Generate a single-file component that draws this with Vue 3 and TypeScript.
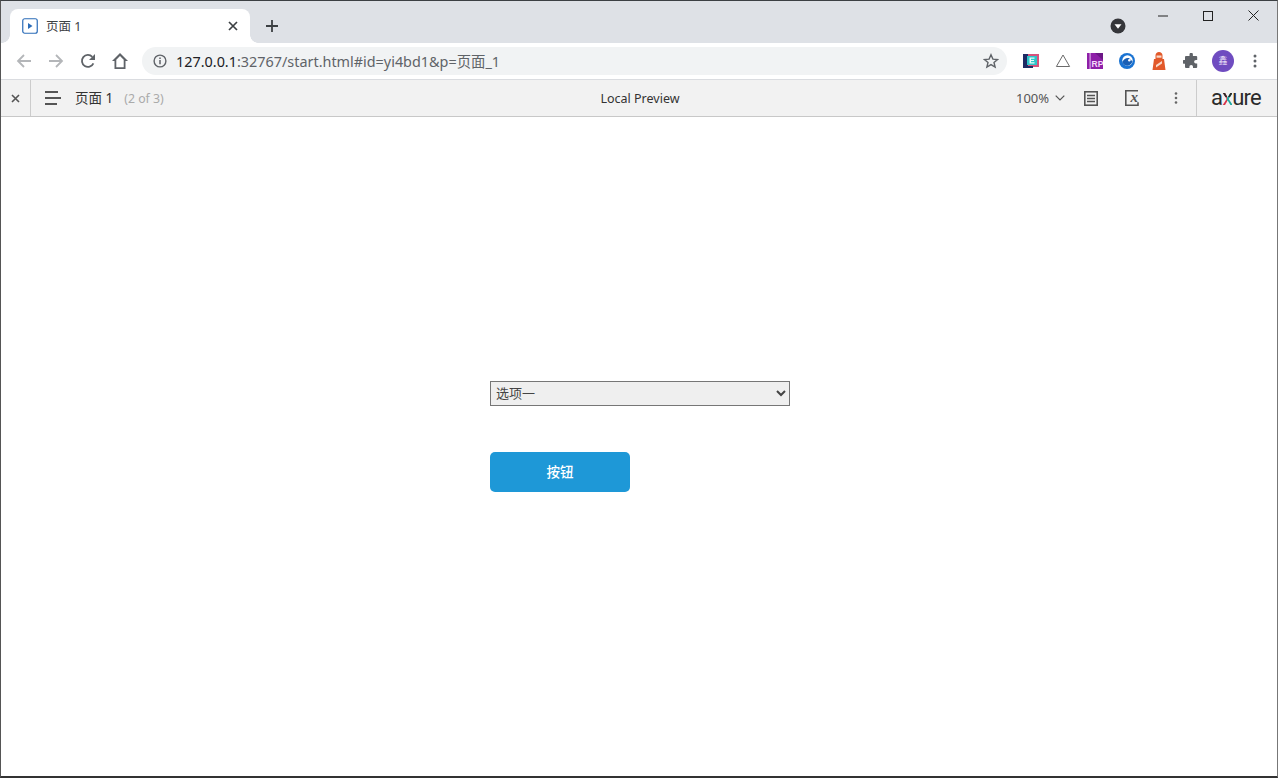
<template>
  <div class="window">
    <div class="tabstrip">
      <div class="tab">
        <svg class="favicon" width="16" height="16" viewBox="0 0 16 16">
          <rect x="0.75" y="0.75" width="14.5" height="14.5" rx="2" fill="#fff" stroke="#2b6cb8" stroke-width="1.2" />
          <path d="M6 5l4.5 3L6 11z" fill="#2b6cb8" />
        </svg>
        <span class="tab-title">页面 1</span>
        <svg class="tab-close" width="10" height="10" viewBox="0 0 10 10">
          <path d="M1 1l8 8M9 1l-8 8" stroke="#3c4043" stroke-width="1.7" />
        </svg>
      </div>
      <svg class="new-tab" width="14" height="14" viewBox="0 0 14 14">
        <path d="M7 1v12M1 7h12" stroke="#3c4043" stroke-width="1.8" />
      </svg>
      <div class="strip-space"></div>
      <svg class="profile-drop" width="16" height="16" viewBox="0 0 16 16">
        <circle cx="8" cy="8" r="7.5" fill="#35363a" />
        <path d="M4.5 6.2h7L8 10.8z" fill="#fff" />
      </svg>
      <div class="win-controls">
        <svg width="10" height="10" viewBox="0 0 10 10"><path d="M0 5h10" stroke="#222" /></svg>
        <svg width="10" height="10" viewBox="0 0 10 10"><rect x="0.5" y="0.5" width="9" height="9" fill="none" stroke="#222" /></svg>
        <svg width="11" height="11" viewBox="0 0 11 11"><path d="M0.5 0.5l10 10M10.5 0.5l-10 10" stroke="#222" /></svg>
      </div>
    </div>

    <div class="toolbar">
      <div class="nav-buttons">
        <svg width="16" height="16" viewBox="0 0 16 16"><path d="M15 8H2M8 2L2 8l6 6" fill="none" stroke="#b4b6b9" stroke-width="1.8" /></svg>
        <svg width="16" height="16" viewBox="0 0 16 16"><path d="M1 8h13M8 2l6 6-6 6" fill="none" stroke="#b4b6b9" stroke-width="1.8" /></svg>
        <svg width="16" height="16" viewBox="0 0 16 16"><path d="M13.4 10.4A6 6 0 1 1 12.3 3.8" fill="none" stroke="#5f6368" stroke-width="1.8" /><path d="M15 1v6H9z" fill="#5f6368" /></svg>
        <svg width="16" height="18" viewBox="0 0 16 18"><path d="M8 1L0 9h2.500v8h11V9H16zM4.300 15.300V7.800L8 4l3.700 3.800v7.500z" fill="#5f6368" fill-rule="evenodd" /></svg>
      </div>
      <div class="omnibox">
        <svg width="14" height="14" viewBox="0 0 14 14">
          <circle cx="7" cy="7" r="5.9" fill="none" stroke="#5f6368" stroke-width="1.4" />
          <path d="M7 6v4.3M7 3.4v1.5" stroke="#5f6368" stroke-width="1.5" />
        </svg>
        <span class="url"><span class="url-host">127.0.0.1</span>:32767/start.html#id=yi4bd1&amp;p=页面_1</span>
        <svg class="star" width="16" height="16" viewBox="0 0 16 16">
          <path d="M8 1.8l1.900 4.300 4.600.4-3.500 3 1.100 4.600L8 11.600l-4.100 2.500L5 9.500l-3.500-3 4.600-.4z" fill="none" stroke="#5f6368" stroke-width="1.4" />
        </svg>
      </div>
      <div class="extensions">
        <svg width="16" height="16" viewBox="0 0 16 16">
          <rect x="4" y="1" width="12" height="13" fill="#d8527c" />
          <rect x="0" y="1" width="5" height="14" fill="#1e2a63" />
          <rect x="0" y="13" width="10" height="2" fill="#1e2a63" />
          <rect x="4" y="3" width="10" height="9" fill="#2fc4c8" />
          <path d="M6.500 4.500h5v1.300H8v1.100h3v1.200H8v1.100h3.500v1.300h-5z" fill="#e8fbfb" />
        </svg>
        <svg width="16" height="16" viewBox="0 0 16 16"><path d="M8 2l6.600 11.500H1.400z" fill="none" stroke="#6b6b6b" /></svg>
        <svg width="16" height="16" viewBox="0 0 16 16">
          <rect x="0" y="0" width="16" height="16" fill="#8e1fa8" />
          <rect x="2.500" y="0" width="1.200" height="16" fill="#d9a8e4" />
          <path d="M8 0h8v7z" fill="#6b1786" />
          <text x="4.500" y="14" font-size="8.500" font-family="Liberation Sans" font-weight="700" fill="#f4d9fa">RP</text>
        </svg>
        <svg width="16" height="16" viewBox="0 0 16 16">
          <circle cx="8" cy="8" r="8" fill="#1a73d2" />
          <circle cx="8.500" cy="7.500" r="5.200" fill="#fff" />
          <path d="M3.300 9C5 5.500 7.500 4.500 10 5c1 1.500 2.500 2.500 3.500 3-.5 2.500-2.500 4.500-5 4.700-2.500 0-4.500-1.500-5.200-3.700z" fill="#1a5fb4" />
          <circle cx="10.300" cy="7.200" r="1.200" fill="#fff" />
        </svg>
        <svg width="16" height="18" viewBox="0 0 16 18">
          <path d="M8 0c2 0 3.500 1.500 3.500 3.500V7H13l1.500 11h-13L3 7h1.500V3.500C4.500 1.500 6 0 8 0z" fill="#e2592a" />
          <rect x="5.500" y="3.500" width="5" height="2.200" fill="#f8d9c9" />
          <path d="M5 13l6-4v2.500l-6 4z" fill="#f8d9c9" />
        </svg>
        <svg width="16" height="16" viewBox="0 0 16 16">
          <path d="M6.500 1.500a1.700 1.700 0 0 1 3.400 0V3h3.300a1 1 0 0 1 1 1v3h-1.300a1.800 1.800 0 0 0 0 3.600h1.300v3.400a1 1 0 0 1-1 1H10v-1.300a1.800 1.800 0 0 0-3.600 0V15H3a1 1 0 0 1-1-1v-3.300H.800a1.800 1.800 0 0 1 0-3.600H2V4a1 1 0 0 1 1-1h3.500z" fill="#5f6368" />
        </svg>
        <div class="avatar">鑫</div>
        <svg class="menu-dots" width="4" height="14" viewBox="0 0 4 14">
          <circle cx="2" cy="2" r="1.500" fill="#5f6368" />
          <circle cx="2" cy="7" r="1.500" fill="#5f6368" />
          <circle cx="2" cy="12" r="1.500" fill="#5f6368" />
        </svg>
      </div>
    </div>

    <div class="axure-bar">
      <div class="close-cell">
        <svg width="9" height="9" viewBox="0 0 9 9"><path d="M1 1l7 7M8 1L1 8" stroke="#555" stroke-width="1.600" /></svg>
      </div>
      <div class="page-info">
        <svg width="16" height="14" viewBox="0 0 16 14">
          <path d="M0 1h13M0 7h16M0 13h12" stroke="#555" stroke-width="2" />
        </svg>
        <span class="page-name">页面 1</span>
        <span class="page-count">(2 of 3)</span>
      </div>
      <div class="preview-label">Local Preview</div>
      <div class="bar-tools">
        <span class="zoom-level">100%</span>
        <svg class="zoom-chevron" width="10" height="6" viewBox="0 0 10 6"><path d="M0.700 0.700L5 5l4.300-4.300" fill="none" stroke="#555" stroke-width="1.200" /></svg>
        <svg class="doc-icon" width="14" height="15" viewBox="0 0 14 15">
          <rect x="0.800" y="0.800" width="12.400" height="13.400" fill="none" stroke="#555" stroke-width="1.600" />
          <path d="M3 4.500h8M3 7.500h8M3 10.500h8" stroke="#555" stroke-width="1.300" />
        </svg>
        <svg class="var-icon" width="16" height="16" viewBox="0 0 16 16">
          <path d="M13 .800H.800v14.400H13v-3" fill="none" stroke="#555" stroke-width="1.600" />
          <text x="5.500" y="12" font-size="15" font-style="italic" font-family="Liberation Serif" font-weight="700" fill="#555">x</text>
        </svg>
        <svg class="bar-dots" width="4" height="12" viewBox="0 0 4 12">
          <circle cx="2" cy="1.500" r="1.300" fill="#666" />
          <circle cx="2" cy="6" r="1.300" fill="#666" />
          <circle cx="2" cy="10.500" r="1.300" fill="#666" />
        </svg>
      </div>
      <div class="axure-logo">a<span class="logo-x">x</span>ure</div>
    </div>

    <main class="page">
      <select class="page-select">
        <option>选项一</option>
        <option>选项二</option>
      </select>
      <button class="page-button" type="button">按钮</button>
    </main>
  </div>
</template>

<script setup lang="ts">
</script>

<style>
html,
body {
  margin: 0;
  background: #fff;
}
</style>

<style scoped>
.window {
  box-sizing: border-box;
  width: 1278px;
  height: 778px;
  display: flex;
  flex-direction: column;
  border-top: 1px solid #3c4043;
  border-left: 1px solid #555;
  border-right: 1px solid #777;
  border-bottom: 2px solid #333;
  font-family: "Noto Sans", "Noto Sans CJK SC", sans-serif;
  overflow: hidden;
}

.tabstrip {
  height: 42px;
  flex: none;
  display: flex;
  align-items: flex-end;
  background: #dee1e6;
  padding-left: 9px;
}

.tab {
  position: relative;
  box-sizing: border-box;
  width: 240px;
  height: 34px;
  display: flex;
  align-items: center;
  padding: 0 12px;
  background: #fff;
  border-radius: 8px 8px 0 0;
}

.tab::before,
.tab::after {
  content: "";
  position: absolute;
  bottom: 0;
  width: 8px;
  height: 8px;
}

.tab::before {
  left: -8px;
  background: radial-gradient(circle at 0 0, #dee1e6 7.5px, #fff 8px);
}

.tab::after {
  right: -8px;
  background: radial-gradient(circle at 100% 0, #dee1e6 7.5px, #fff 8px);
}

.favicon {
  flex: none;
}

.tab-title {
  margin-left: 8px;
  padding-bottom: 2px;
  flex: 1;
  font-size: 12.5px;
  color: #3c4043;
}

.new-tab {
  margin: 0 0 10px 15px;
}

.strip-space {
  flex: 1;
}

.profile-drop {
  margin-bottom: 9px;
}

.win-controls {
  align-self: flex-start;
  display: flex;
  align-items: center;
  gap: 35px;
  margin: 9px 18px 0 32px;
}

.toolbar {
  height: 37px;
  flex: none;
  display: flex;
  align-items: center;
  background: #fff;
  border-bottom: 1px solid #dadce0;
  box-sizing: border-box;
}

.nav-buttons {
  display: flex;
  align-items: center;
  gap: 16px;
  padding-left: 15px;
}

.omnibox {
  box-sizing: border-box;
  width: 865px;
  height: 28px;
  margin-left: 14px;
  display: flex;
  align-items: center;
  padding: 0 8px 0 11px;
  background: #f1f3f4;
  border-radius: 14px;
}

.url {
  flex: 1;
  margin-left: 9px;
  padding-bottom: 2px;
  font-size: 14.4px;
  color: #5f6368;
  white-space: nowrap;
}

.url-host {
  color: #202124;
}

.extensions {
  display: flex;
  align-items: center;
  gap: 16px;
  padding-left: 16px;
}

.avatar {
  width: 22px;
  height: 22px;
  margin-left: -3px;
  border-radius: 50%;
  background: #6f4cc0;
  color: #e6dcf5;
  font-size: 9px;
  line-height: 22px;
  text-align: center;
}

.menu-dots {
  margin-left: 3px;
}

.axure-bar {
  box-sizing: border-box;
  height: 37px;
  flex: none;
  display: flex;
  align-items: center;
  background: #f2f2f2;
  border-bottom: 1px solid #c8c8c8;
}

.close-cell {
  box-sizing: border-box;
  width: 30px;
  height: 100%;
  display: flex;
  align-items: center;
  justify-content: center;
  border-right: 1px solid #ccc;
}

.page-info {
  box-sizing: border-box;
  width: 250px;
  display: flex;
  align-items: center;
  padding-left: 14px;
  white-space: nowrap;
}

.page-name {
  margin-left: 14px;
  padding-bottom: 2px;
  font-size: 13.5px;
  color: #333;
}

.page-count {
  margin-left: 11px;
  font-size: 12.3px;
  color: #aaa;
}

.preview-label {
  width: 718px;
  text-align: center;
  font-size: 12.5px;
  color: #333;
}

.bar-tools {
  box-sizing: border-box;
  width: 198px;
  height: 100%;
  display: flex;
  align-items: center;
  border-right: 1px solid #ccc;
}

.zoom-level {
  margin-left: 17px;
  font-size: 13px;
  color: #555;
}

.zoom-chevron {
  margin-left: 6px;
}

.doc-icon {
  margin-left: 19px;
}

.var-icon {
  margin-left: 27px;
}

.bar-dots {
  margin-left: 33px;
}

.axure-logo {
  margin-left: 14px;
  font-family: Roboto, sans-serif;
  font-size: 22px;
  line-height: 1;
  letter-spacing: -0.8px;
  color: #2b2b2b;
  white-space: nowrap;
}

.logo-x {
  background:
    linear-gradient(#2b2b2b 50%, transparent 50%),
    linear-gradient(90deg, #d8344a 50%, #1fa7a0 50%);
  -webkit-background-clip: text;
  background-clip: text;
  color: transparent;
}

.page {
  flex: 1;
  display: flex;
  flex-direction: column;
  align-items: flex-start;
  padding: 264px 0 0 489px;
  background: #fff;
}

.page-select {
  box-sizing: border-box;
  width: 300px;
  height: 25px;
  padding: 0 1px 2px;
  border: 1px solid #767676;
  border-radius: 0;
  background-color: #efefef;
  color: #444;
  font-family: "Noto Sans CJK SC", sans-serif;
  font-size: 13px;
}

.page-button {
  width: 140px;
  height: 40px;
  margin-top: 46px;
  padding: 0 0 2px;
  border: none;
  border-radius: 5px;
  background: #1e98d7;
  color: #fff;
  font-family: "Noto Sans CJK SC", sans-serif;
  font-size: 13.5px;
  font-weight: 500;
}
</style>
